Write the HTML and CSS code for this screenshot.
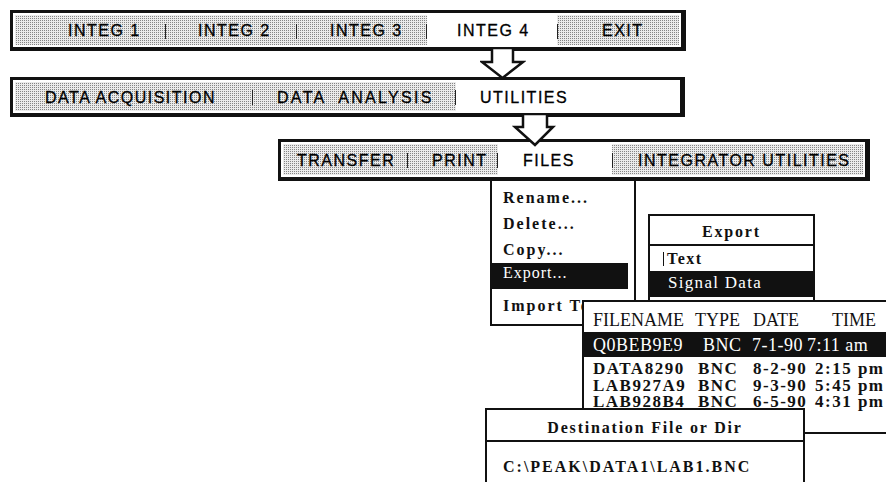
FILE: index.html
```html
<!DOCTYPE html>
<html lang="en">
<head>
    <meta charset="UTF-8">
    <title>Integrator Menu Tree</title>
    <link rel="stylesheet" href="styles.css">
</head>
<body>
    <div class="canvas">
        <!-- top level menu -->
        <div class="bar bar-main">
            <div class="cells">
                <span class="cell integ1">INTEG 1</span>
                <i class="sep"></i>
                <span class="cell integ2">INTEG 2</span>
                <i class="sep"></i>
                <span class="cell integ3">INTEG 3</span>
                <i class="sep"></i>
                <span class="cell integ4 on">INTEG 4</span>
                <i class="sep"></i>
                <span class="cell exit">EXIT</span>
            </div>
        </div>

        <svg class="arrow arrow-one" width="46" height="33" viewBox="0 0 46 33">
            <polygon points="12,0 12,14 2,14 22.5,30 43,14 33,14 33,0"/>
        </svg>

        <!-- second level -->
        <div class="bar bar-mode">
            <div class="cells">
                <span class="cell acq">DATA ACQUISITION</span>
                <i class="sep"></i>
                <span class="cell ana">DATA  ANALYSIS</span>
                <i class="sep"></i>
                <span class="cell utl on">UTILITIES</span>
            </div>
        </div>

        <svg class="arrow arrow-two" width="44" height="33" viewBox="0 0 44 33">
            <polygon points="11,0 11,13 3,13 23,31 41,13 35,13 35,0"/>
        </svg>

        <!-- utilities level -->
        <div class="bar bar-util">
            <div class="cells">
                <span class="cell xfer">TRANSFER</span>
                <i class="sep"></i>
                <span class="cell print">PRINT</span>
                <i class="sep"></i>
                <span class="cell files on">FILES</span>
                <i class="sep"></i>
                <span class="cell intu">INTEGRATOR UTILITIES</span>
            </div>
        </div>

        <ul class="files-menu">
            <li>Rename...</li>
            <li>Delete...</li>
            <li>Copy...</li>
            <li class="hl">Export...</li>
            <li class="gap">Import Text</li>
        </ul>

        <div class="box export-box">
            <div class="box-title">Export</div>
            <div class="opt cursor">Text</div>
            <div class="opt hl">Signal Data</div>
        </div>

        <div class="box file-box">
            <div class="fhead">
                <span>FILENAME</span><span>TYPE</span><span>DATE</span><span>TIME</span>
            </div>
            <div class="fsel">
                <span>Q0BEB9E9</span><span>BNC</span><span>7-1-90</span><span>7:11 am</span>
            </div>
            <div class="flist">
                <div class="frow"><span>DATA8290</span><span>BNC</span><span>8-2-90</span><span>2:15 pm</span></div>
                <div class="frow"><span>LAB927A9</span><span>BNC</span><span>9-3-90</span><span>5:45 pm</span></div>
                <div class="frow"><span>LAB928B4</span><span>BNC</span><span>6-5-90</span><span>4:31 pm</span></div>
            </div>
        </div>

        <div class="box dest-box">
            <div class="box-title">Destination File or Dir</div>
            <div class="path">C:\PEAK\DATA1\LAB1.BNC</div>
        </div>
    </div>
</body>
</html>
```

FILE: styles.css
```css
* {
    box-sizing: border-box;
}
body {
    margin: 0;
    background: #fff;
    color: #111;
    font-family: "Liberation Sans", Arial, sans-serif;
}
.canvas {
    position: relative;
    width: 886px;
    height: 482px;
    overflow: hidden;
}

/* menu bars */
.bar {
    position: absolute;
    display: flex;
    padding: 2px;
    background: #fff;
    border: 3px solid #111;
    border-right-width: 5px;
    border-bottom-width: 4px;
}
.bar-main {
    left: 10px;
    top: 10px;
    width: 676px;
    height: 41px;
}
.bar-mode {
    left: 10px;
    top: 77px;
    width: 675px;
    height: 40px;
}
.bar-util {
    left: 278px;
    top: 139px;
    width: 592px;
    height: 42px;
}
/* dot screen: light rows and columns leave one dark pixel per 2x2 tile */
.cells {
    flex: 1;
    display: flex;
    background-color: #858585;
    background-image:
        linear-gradient(90deg, #ebebeb 1px, transparent 1px),
        linear-gradient(#ebebeb 1px, transparent 1px);
    background-size: 2px 2px;
}
.cell {
    flex: none;
    display: flex;
    align-items: center;
    padding-top: 2px;
    font-size: 16px;
    letter-spacing: 1.5px;
    white-space: pre;
    color: #000;
    -webkit-text-stroke: 0.3px #000;
}
.cell.on {
    background: #fff;
}
.sep {
    flex: none;
    width: 1px;
    height: 15px;
    margin-top: 2px;
    align-self: center;
    background: #222;
}
.integ1 { width: 150px; padding-left: 53px; }
.integ2 { width: 130px; padding-left: 32px; }
.integ3 { width: 129px; padding-left: 33px; }
.integ4 { width: 130px; padding-left: 30px; }
.exit { flex: 1; padding-left: 44px; }
.acq { width: 237px; padding-left: 30px; }
.ana { width: 202px; padding-left: 24px; letter-spacing: 2.3px; }
.utl { flex: 1; padding-left: 24px; }
.xfer { width: 124px; padding-left: 14px; }
.print { width: 89px; padding-left: 24px; }
.files { width: 114px; padding-left: 25px; }
.intu { flex: 1; padding-left: 25px; }

/* arrows between levels */
.arrow {
    position: absolute;
    z-index: 2;
}
.arrow polygon {
    fill: #fff;
    stroke: #111;
    stroke-width: 2.5;
}
.arrow-one {
    left: 480px;
    top: 48px;
}
.arrow-two {
    left: 512px;
    top: 114px;
}

/* pull-down and dialogs */
.files-menu {
    position: absolute;
    left: 490px;
    top: 181px;
    width: 146px;
    height: 145px;
    margin: 0;
    padding: 4px 0 0;
    list-style: none;
    background: #fff;
    border: 2px solid #111;
    border-top: 0;
    overflow: hidden;
    font: bold 16px "Liberation Serif", "Times New Roman", serif;
    letter-spacing: 2px;
    white-space: nowrap;
}
.files-menu li {
    line-height: 26px;
    padding-left: 11px;
}
.files-menu .hl {
    margin-right: 6px;
    padding-bottom: 6px;
    line-height: 20px;
    background: #111;
    color: #fff;
    font-weight: normal;
    letter-spacing: 1px;
}
.files-menu .gap {
    margin-top: 4px;
}
.box {
    position: absolute;
    background: #fff;
    border: 2px solid #111;
    overflow: hidden;
    font-family: "Liberation Serif", "Times New Roman", serif;
    white-space: nowrap;
}
.box-title {
    padding-top: 4px;
    line-height: 24px;
    text-align: center;
    border-bottom: 2px solid #111;
    font-size: 16px;
    font-weight: bold;
    letter-spacing: 1.8px;
}
.export-box {
    left: 648px;
    top: 214px;
    width: 167px;
    height: 88px;
}
.opt {
    padding-left: 13px;
    line-height: 25px;
    font-size: 16px;
    font-weight: bold;
    letter-spacing: 1.5px;
}
.opt.cursor::before {
    content: "";
    display: inline-block;
    width: 1px;
    height: 14px;
    margin-right: 3px;
    vertical-align: -2px;
    background: #111;
}
.opt.hl {
    padding: 0 0 2px 18px;
    line-height: 24px;
    background: #111;
    color: #fff;
    font-size: 17px;
    font-weight: normal;
    letter-spacing: 1.3px;
}
.file-box {
    left: 582px;
    top: 300px;
    width: 330px;
    height: 134px;
    z-index: 3;
}
.fhead,
.fsel,
.frow {
    display: grid;
    padding-left: 9px;
}
.fhead {
    grid-template-columns: 102px 58px 79px auto;
    padding-top: 6px;
    line-height: 24px;
    font-size: 18px;
}
.fsel {
    grid-template-columns: 110px 49px 55px auto;
    padding-top: 1px;
    line-height: 24px;
    background: #111;
    color: #fff;
    font-size: 18px;
    letter-spacing: 0.5px;
}
.flist {
    padding-top: 4px;
}
.frow {
    grid-template-columns: 105px 55px 62px auto;
    line-height: 16.5px;
    font-size: 17px;
    font-weight: bold;
    letter-spacing: 1.5px;
}
.dest-box {
    left: 485px;
    top: 408px;
    width: 320px;
    height: 80px;
    z-index: 4;
}
.dest-box .box-title {
    padding-top: 6px;
}
.path {
    padding: 13px 0 0 16px;
    line-height: 24px;
    font-size: 16px;
    font-weight: bold;
    letter-spacing: 2px;
}
```
